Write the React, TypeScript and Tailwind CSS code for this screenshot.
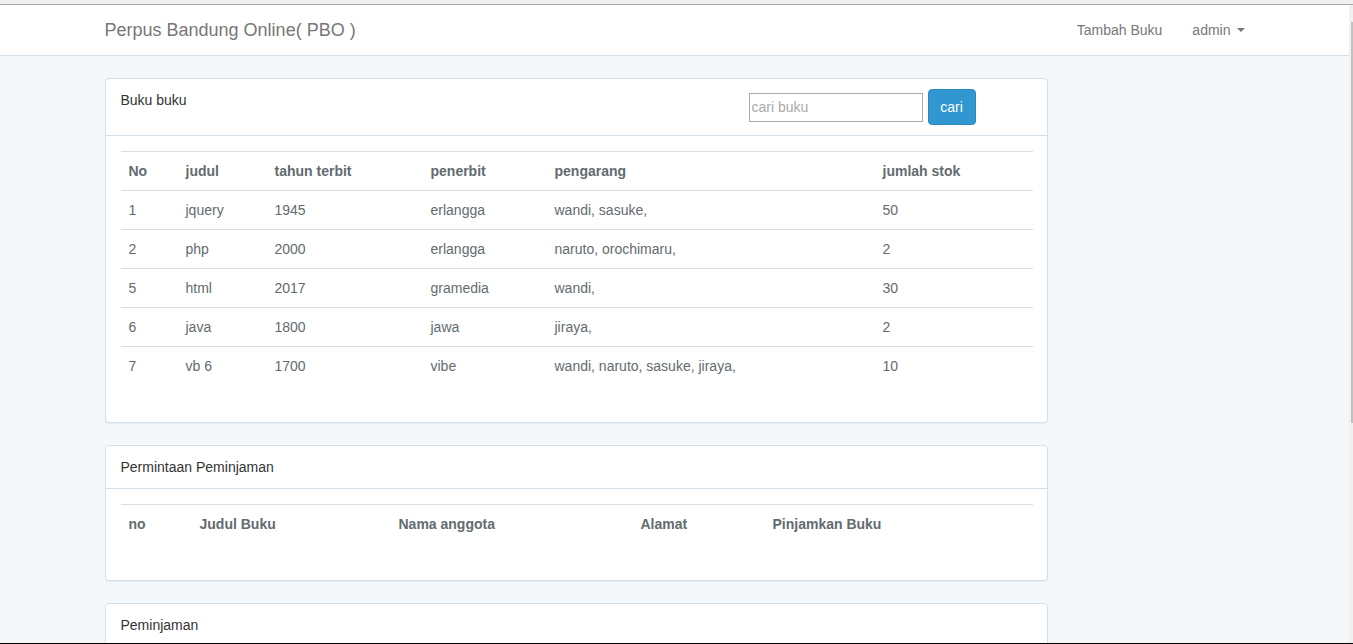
import React from "react";

const books = [
  ["1", "jquery", "1945", "erlangga", "wandi, sasuke,", "50"],
  ["2", "php", "2000", "erlangga", "naruto, orochimaru,", "2"],
  ["5", "html", "2017", "gramedia", "wandi,", "30"],
  ["6", "java", "1800", "jawa", "jiraya,", "2"],
  ["7", "vb 6", "1700", "vibe", "wandi, naruto, sasuke, jiraya,", "10"],
];

const bookCols = ["w-[57px]", "w-[89px]", "w-[156px]", "w-[124px]", "w-[328px]", "w-[158px]"];
const bookHead = ["No", "judul", "tahun terbit", "penerbit", "pengarang", "jumlah stok"];
const reqCols = ["w-[71px]", "w-[199px]", "w-[242px]", "w-[132px]", "w-[268px]"];
const reqHead = ["no", "Judul Buku", "Nama anggota", "Alamat", "Pinjamkan Buku"];

function Panel({ heading, children }: { heading: React.ReactNode; children?: React.ReactNode }) {
  return (
    <div className="mb-[22px] w-[943px] rounded-[4px] border border-[#d3e0e9] bg-white shadow-[0_1px_1px_rgba(0,0,0,0.05)]">
      <div className="rounded-t-[3px] border-b border-[#d3e0e9] px-[15px] py-[10px] text-[14px] leading-[22px] text-[#333]">
        {heading}
      </div>
      {children !== undefined && <div className="p-[15px]">{children}</div>}
    </div>
  );
}

export default function App() {
  return (
    <div
      className="flex h-[644px] w-[1353px] flex-col overflow-hidden bg-[#f5f8fa] text-[14px] text-[#636b6f]"
      style={{ fontFamily: '"Liberation Sans", Arial, sans-serif' }}
    >
      <div className="h-[5px] shrink-0 border-b border-[#a8a8a8] bg-[#f0f0f0]" />
      <div className="flex min-h-0 flex-1">
        <div className="flex min-w-0 flex-1 flex-col overflow-hidden">
          <nav className="h-[51px] shrink-0 border-b border-[#d3e0e9] bg-white">
            <div className="mx-auto flex h-[50px] w-[1170px] items-center justify-between px-[15px]">
              <div className="text-[18px] leading-[20px] text-[#777]">Perpus Bandung Online( PBO )</div>
              <div className="-mr-[15px] flex items-center text-[14px] text-[#777]">
                <span className="px-[15px] leading-[20px]">Tambah Buku</span>
                <span className="flex items-center px-[15px] leading-[20px]">
                  admin
                  <span className="ml-[6px] inline-block h-0 w-0 border-x-[4px] border-t-[4px] border-x-transparent border-t-[#777]" />
                </span>
              </div>
            </div>
          </nav>
          <div className="mx-auto mt-[22px] w-[1170px] px-[15px]">
            <Panel
              heading={
                <div className="flex items-start">
                  <div className="w-[628px]">Buku buku</div>
                  <div className="flex h-[36px] items-center gap-[5px]">
                    <input
                      placeholder="cari buku"
                      className="h-[29px] w-[174px] border border-[#a9a9a9] bg-white px-[2px] text-[14px] leading-[20px] text-[#333] outline-none placeholder:text-[#a9a9a9]"
                    />
                    <button className="h-[36px] w-[48px] rounded-[4px] border border-[#2a88bd] bg-[#3097d1] text-[14px] leading-[22px] text-white">
                      cari
                    </button>
                  </div>
                </div>
              }
            >
              <table className="mb-[22px] w-[912px] table-fixed border-collapse">
                <colgroup>
                  {bookCols.map((c, i) => (
                    <col key={i} className={c} />
                  ))}
                </colgroup>
                <tbody>
                  <tr>
                    {bookHead.map((h) => (
                      <th key={h} className="border-t border-[#ddd] p-[8px] text-left font-bold leading-[22px]">
                        {h}
                      </th>
                    ))}
                  </tr>
                  {books.map((r) => (
                    <tr key={r[0]}>
                      {r.map((c, i) => (
                        <td key={i} className="border-t border-[#ddd] p-[8px] leading-[22px]">
                          {c}
                        </td>
                      ))}
                    </tr>
                  ))}
                </tbody>
              </table>
            </Panel>
            <Panel heading="Permintaan Peminjaman">
              <table className="mb-[22px] w-[912px] table-fixed border-collapse">
                <colgroup>
                  {reqCols.map((c, i) => (
                    <col key={i} className={c} />
                  ))}
                </colgroup>
                <tbody>
                  <tr>
                    {reqHead.map((h) => (
                      <th key={h} className="border-t border-[#ddd] p-[8px] text-left font-bold leading-[22px]">
                        {h}
                      </th>
                    ))}
                  </tr>
                </tbody>
              </table>
            </Panel>
            <Panel heading="Peminjaman">
              <div className="h-[200px]" />
            </Panel>
          </div>
        </div>
        <div className="flex w-[4px] shrink-0 justify-end bg-[#f1f1f1]">
          <div className="mt-[17px] h-[401px] w-[2px] bg-[#c1c1c1]" />
        </div>
      </div>
      <div className="h-[1px] shrink-0 bg-black" />
    </div>
  );
}
